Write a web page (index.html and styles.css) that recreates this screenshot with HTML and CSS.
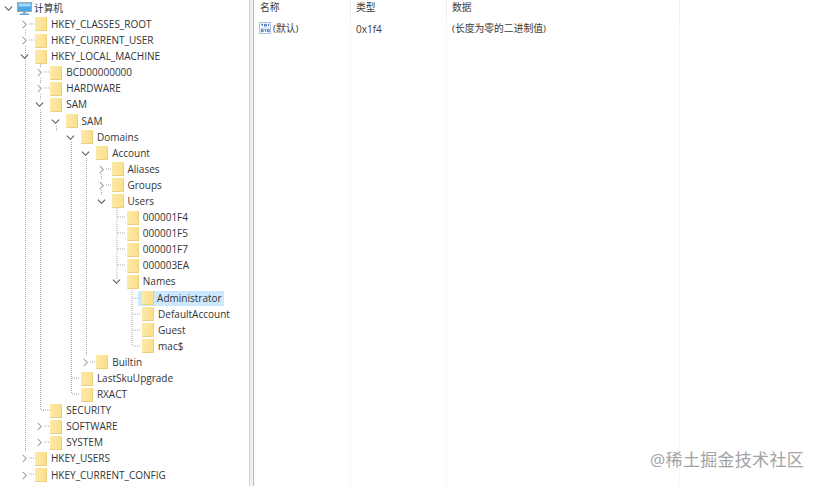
FILE: index.html
```html
<!DOCTYPE html>
<html lang="zh-CN">
<head>
<meta charset="utf-8">
<title>注册表编辑器</title>
<link rel="stylesheet" href="styles.css">
</head>
<body>
<div class="app">
  <div class="tree">
    <svg class="guides" width="249" height="486" viewBox="0 0 249 486">
      <g class="dots">
        <path d="M25.5 30V35M25.5 46V452"/><path d="M40.500 62V67M40.500 78V83M40.500 94V99M40.500 110V410"/><path d="M56.500 126V131"/><path d="M71.500 142V394"/><path d="M86.500 158V356"/><path d="M101.500 174V179M101.500 190V195"/><path d="M117 206V282"/><path d="M132 288V346"/>
        <path d="M29 24H34M29 40H34M29 458H34M29 474H34"/>
        <path d="M44 72H50M44 88H50M41 410H50M44 426H50M44 442H50"/>
        <path d="M106 169H111M106 185H111M90 362H95M72 378H80M72 394H80"/>
        <path d="M118 217H126M118 233H126M118 249H126M118 265H126"/>
        <path d="M133 298H141M133 314H141M133 330H141M133 346H141"/>
      </g>
    </svg>
    <div class="row"><svg class="tog" viewBox="0 0 10 10"><path d="M1 3l4 4 4-4"/></svg><svg class="pc" viewBox="0 0 15 13"><rect x=".5" y=".5" width="14" height="9" fill="#4aa8e6" stroke="#9aa8b4"/><rect x="1.500" y="1.500" width="12" height="3" fill="#a4daf8"/><path d="M6 10h3v1.500H6z" fill="#7aa6c8"/><path d="M3 11.500h9V13H3z" fill="#5aa0d6"/></svg><span class="label zh">计算机</span></div>
    <div class="row d1"><svg class="tog closed" viewBox="0 0 10 10"><path d="M3 1l4 4-4 4"/></svg><i class="folder"></i><span class="label">HKEY_CLASSES_ROOT</span></div>
    <div class="row d1"><svg class="tog closed" viewBox="0 0 10 10"><path d="M3 1l4 4-4 4"/></svg><i class="folder"></i><span class="label">HKEY_CURRENT_USER</span></div>
    <div class="row d1"><svg class="tog" viewBox="0 0 10 10"><path d="M1 3l4 4 4-4"/></svg><i class="folder"></i><span class="label">HKEY_LOCAL_MACHINE</span></div>
    <div class="row d2"><svg class="tog closed" viewBox="0 0 10 10"><path d="M3 1l4 4-4 4"/></svg><i class="folder"></i><span class="label">BCD00000000</span></div>
    <div class="row d2"><svg class="tog closed" viewBox="0 0 10 10"><path d="M3 1l4 4-4 4"/></svg><i class="folder"></i><span class="label">HARDWARE</span></div>
    <div class="row d2"><svg class="tog" viewBox="0 0 10 10"><path d="M1 3l4 4 4-4"/></svg><i class="folder"></i><span class="label">SAM</span></div>
    <div class="row d3"><svg class="tog" viewBox="0 0 10 10"><path d="M1 3l4 4 4-4"/></svg><i class="folder"></i><span class="label">SAM</span></div>
    <div class="row d4"><svg class="tog" viewBox="0 0 10 10"><path d="M1 3l4 4 4-4"/></svg><i class="folder"></i><span class="label">Domains</span></div>
    <div class="row d5"><svg class="tog" viewBox="0 0 10 10"><path d="M1 3l4 4 4-4"/></svg><i class="folder"></i><span class="label">Account</span></div>
    <div class="row d6"><svg class="tog closed" viewBox="0 0 10 10"><path d="M3 1l4 4-4 4"/></svg><i class="folder"></i><span class="label">Aliases</span></div>
    <div class="row d6"><svg class="tog closed" viewBox="0 0 10 10"><path d="M3 1l4 4-4 4"/></svg><i class="folder"></i><span class="label">Groups</span></div>
    <div class="row d6"><svg class="tog" viewBox="0 0 10 10"><path d="M1 3l4 4 4-4"/></svg><i class="folder"></i><span class="label">Users</span></div>
    <div class="row d7"><span class="tog"></span><i class="folder"></i><span class="label">000001F4</span></div>
    <div class="row d7"><span class="tog"></span><i class="folder"></i><span class="label">000001F5</span></div>
    <div class="row d7"><span class="tog"></span><i class="folder"></i><span class="label">000001F7</span></div>
    <div class="row d7"><span class="tog"></span><i class="folder"></i><span class="label">000003EA</span></div>
    <div class="row d7"><svg class="tog" viewBox="0 0 10 10"><path d="M1 3l4 4 4-4"/></svg><i class="folder"></i><span class="label">Names</span></div>
    <div class="row d8"><span class="tog"></span><i class="folder"></i><span class="label sel">Administrator</span></div>
    <div class="row d8"><span class="tog"></span><i class="folder"></i><span class="label">DefaultAccount</span></div>
    <div class="row d8"><span class="tog"></span><i class="folder"></i><span class="label">Guest</span></div>
    <div class="row d8"><span class="tog"></span><i class="folder"></i><span class="label">mac$</span></div>
    <div class="row d5"><svg class="tog closed" viewBox="0 0 10 10"><path d="M3 1l4 4-4 4"/></svg><i class="folder"></i><span class="label">Builtin</span></div>
    <div class="row d4"><span class="tog"></span><i class="folder"></i><span class="label">LastSkuUpgrade</span></div>
    <div class="row d4"><span class="tog"></span><i class="folder"></i><span class="label">RXACT</span></div>
    <div class="row d2"><span class="tog"></span><i class="folder"></i><span class="label">SECURITY</span></div>
    <div class="row d2"><svg class="tog closed" viewBox="0 0 10 10"><path d="M3 1l4 4-4 4"/></svg><i class="folder"></i><span class="label">SOFTWARE</span></div>
    <div class="row d2"><svg class="tog closed" viewBox="0 0 10 10"><path d="M3 1l4 4-4 4"/></svg><i class="folder"></i><span class="label">SYSTEM</span></div>
    <div class="row d1"><svg class="tog closed" viewBox="0 0 10 10"><path d="M3 1l4 4-4 4"/></svg><i class="folder"></i><span class="label">HKEY_USERS</span></div>
    <div class="row d1"><svg class="tog closed" viewBox="0 0 10 10"><path d="M3 1l4 4-4 4"/></svg><i class="folder"></i><span class="label">HKEY_CURRENT_CONFIG</span></div>
  </div>
  <div class="split"></div>
  <div class="list">
    <div class="cols head">
      <div class="c c1 cjk">名称</div><div class="c c2 cjk">类型</div><div class="c c3 cjk">数据</div><div class="c c4"></div>
    </div>
    <div class="cols body">
      <div class="c c1 cjk"><svg class="bin" viewBox="0 0 13 13"><rect x=".5" y=".5" width="12" height="12" fill="#fff" stroke="#a9bedd"/><path d="M2.500 2.500h2M3.500 2.500v2M6 2.500h2v2H6zM9.500 2.500h1v2M2.500 8h2v2.500h-2zM6 8h1v2.500M9 8h2v2.500H9z" fill="none" stroke="#2f5fb0"/><path d="M2 6.500h9" stroke="#c6d4ea"/></svg>(默认)</div>
      <div class="c c2">0x1f4</div>
      <div class="c c3 cjk">(长度为零的二进制值)</div>
      <div class="c c4"></div>
    </div>
  </div>
</div>
<div class="mark">@稀土掘金技术社区</div>
</body>
</html>
```
FILE: styles.css
```css
* { box-sizing: border-box; }
html, body { margin: 0; height: 100%; overflow: hidden; background: #fff; }
body { position: relative; font-family: "Open Sans", "Noto Sans CJK SC", sans-serif; font-size: 10px; color: #333; }
.app { display: flex; height: 486px; }
.tree { position: relative; width: 249px; flex: none; overflow: hidden; padding-top: .3px; }
.guides { position: absolute; left: 0; top: 0; }
.dots path { fill: none; stroke: #a9a9a9; stroke-width: 1; stroke-dasharray: 1 1; }
.row { position: relative; display: flex; align-items: center; height: 16.1px; white-space: nowrap; }
.tog { width: 9px; height: 9px; margin-left: 4px; margin-right: 6px; flex: none; }
.tog path { fill: none; stroke: #555; stroke-width: 1.2; }
.tog.closed path { stroke: #a8a8a8; }
.pc { width: 15px; height: 13px; margin-left: -2px; flex: none; }
.folder { display: block; position: relative; z-index: 1; width: 12px; height: 14px; flex: none; margin-right: 3px; background: linear-gradient(90deg, #fdeaa8, #fbdf8c); border-radius: 1px; border-right: 1px solid #ecd07c; border-bottom: 1px solid #ecd07c; }
.d1 { padding-left: 16px; }
.d2 { padding-left: 31.3px; }
.d3 { padding-left: 46.6px; }
.d4 { padding-left: 61.9px; }
.d5 { padding-left: 77.2px; }
.d6 { padding-left: 92.5px; }
.d7 { padding-left: 107.8px; }
.d8 { padding-left: 123.1px; }
.label { padding: 0 1px; line-height: 15px; }
.zh { margin-left: 1px; font-size: 9.7px; }
.sel { background: #cce8ff; padding-right: 2px; margin-left: -19px; padding-left: 19px; }
.split { width: 5px; flex: none; background: #f0f0f0; border-left: 1px solid #d0d0d0; border-right: 1px solid #bdbdbd; }
.list { flex: 1; display: flex; flex-direction: column; min-width: 0; }
.cols { display: flex; }
.head { height: 20px; }
.head .c { border-right: 1px solid #eee; }
.body { flex: 1; }
.body .c { padding-top: 1px; border-right: 1px solid #f7f7f7; }
.c { padding-left: 5px; line-height: 16px; color: #3a3a3a; white-space: nowrap; }
.cjk { font-size: 9.8px; }
.c1 { width: 97px; padding-left: 6px; }
.c2 { width: 96px; }
.c3 { width: 233px; padding-left: 5px; }
.c4 { flex: 1; border-right: 0 !important; }
.bin { width: 12px; height: 12px; vertical-align: -2px; margin-right: 2px; margin-left: -1px; }
.mark { position: absolute; right: 15px; top: 449px; font-size: 17px; line-height: 22px; color: #a3a3a3; letter-spacing: .3px; }
```
